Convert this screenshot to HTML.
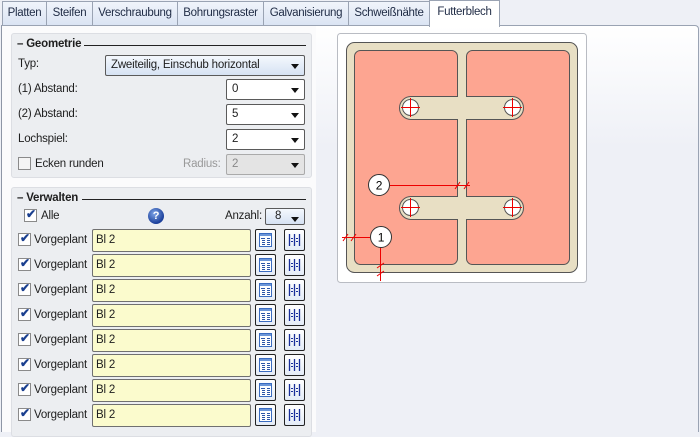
<!DOCTYPE html>
<html><head><meta charset="utf-8"><style>
*{box-sizing:border-box}
body{margin:0;width:700px;height:432px;overflow:hidden;background:#eef0f6;font-family:"Liberation Sans",sans-serif;font-size:11.5px;letter-spacing:-0.2px;color:#1e1e1e;position:relative}
.a{position:absolute}
.tab{position:absolute;top:1px;height:24px;border:1px solid #9aa3b3;border-bottom:none;background:linear-gradient(#f0f4fb,#dbe4f3);line-height:22px;text-align:center;font-size:11.5px;letter-spacing:-0.3px;color:#1e2a44}
.grp{position:absolute;left:11px;width:301px;background:#eceef1;border:1px solid #dcdee3;border-radius:3px}
.lbl{position:absolute}
.dd{position:absolute;height:21px;background:#fff;border:1px solid #5a5a5a;border-radius:2px;padding-left:5px;line-height:19px}
.dd:after{content:"";position:absolute;right:5px;top:8px;border-left:4px solid transparent;border-right:4px solid transparent;border-top:5px solid #111}
.cb{position:absolute;width:13px;height:13px;border:1px solid #8a8a8a;background:#fff}
.ck:after{content:"✔";position:absolute;left:1px;top:-3px;font-size:12px;color:#1a3f8f;font-weight:bold}
.tb{position:absolute;left:92px;width:159px;height:23px;background:#fbfbcd;border:1px solid #707070;border-radius:2px;padding-left:3px;line-height:21px}
.b{position:absolute;width:21px;height:22px;border:1px solid #222;border-radius:2px;background:linear-gradient(#fff,#e4ecf7)}
.b svg{position:absolute;left:0;top:0}
</style></head><body>
<div class="a" style="left:1px;top:25px;width:315px;height:407px;background:#fbfbfc;border-left:1px solid #8e96a6;border-top:1px solid #9aa3b3"></div>
<div class="a" style="left:316px;top:25px;width:383px;height:407px;background:linear-gradient(#fff,#eef0f6 30%);border-top:1px solid #9aa3b3;border-right:1px solid #9aa3b3;border-top-right-radius:4px"></div>
<div class="tab" style="left:2px;width:45px">Platten</div>
<div class="tab" style="left:46px;width:47px">Steifen</div>
<div class="tab" style="left:92px;width:86px">Verschraubung</div>
<div class="tab" style="left:177px;width:87px">Bohrungsraster</div>
<div class="tab" style="left:263px;width:86px">Galvanisierung</div>
<div class="tab" style="left:348px;width:82px">Schweißnähte</div>
<div class="tab" style="left:429px;width:71px;top:0;height:27px;background:#fff;line-height:22px;z-index:2;border-color:#9aa3b3">Futterblech</div>

<div class="grp" style="top:33px;height:145px"></div>
<div class="a" style="left:17px;top:38px;font-weight:bold;background:#eceef1;padding-right:4px">– Geometrie</div>
<div class="a" style="left:84px;top:45px;width:222px;height:1px;background:#222"></div>
<div class="lbl" style="left:18px;top:58px">Typ:</div>
<div class="dd" style="left:105px;top:55px;width:200px;background:linear-gradient(#f4f8fd,#d6e2f3)">Zweiteilig, Einschub horizontal</div>
<div class="lbl" style="left:18px;top:83px">(1) Abstand:</div>
<div class="dd" style="left:226px;top:79px;width:79px">0</div>
<div class="lbl" style="left:18px;top:108px">(2) Abstand:</div>
<div class="dd" style="left:226px;top:104px;width:79px">5</div>
<div class="lbl" style="left:18px;top:133px">Lochspiel:</div>
<div class="dd" style="left:226px;top:129px;width:79px">2</div>
<div class="cb" style="left:18px;top:157px;background:#f4f4f4"></div>
<div class="lbl" style="left:35px;top:158px">Ecken runden</div>
<div class="lbl" style="left:183px;top:158px;color:#999">Radius:</div>
<div class="dd" style="left:226px;top:154px;width:79px;background:#e4e4e4;border-color:#aaa;color:#888">2</div>

<div class="grp" style="top:187px;height:250px"></div>
<div class="a" style="left:17px;top:192px;font-weight:bold;background:#eceef1;padding-right:4px">– Verwalten</div>
<div class="a" style="left:82px;top:199px;width:224px;height:1px;background:#222"></div>
<div class="cb ck" style="left:24px;top:209px"></div>
<div class="lbl" style="left:41px;top:210px">Alle</div>
<div class="a" style="left:148px;top:208px;width:16px;height:16px;border-radius:50%;background:radial-gradient(circle at 40% 35%,#7fa6e8,#1b3f9a 70%);color:#fff;font-weight:bold;font-size:11px;text-align:center;line-height:16px">?</div>
<div class="lbl" style="left:225px;top:210px">Anzahl:</div>
<div class="dd" style="left:265px;top:208px;width:40px;height:17px;line-height:15px;padding-left:9px;background:linear-gradient(#f4f8fd,#d6e2f3)">8</div>

<div style="position:absolute;left:0;top:229px"><div class="cb ck" style="left:18px;top:4px"></div><div class="lbl" style="left:34px;top:5px">Vorgeplant</div><div class="tb" style="top:0">Bl 2</div><div class="b" style="left:255px;top:0"><svg width="19" height="20"><rect x="3.5" y="3.5" width="12" height="13" fill="#fff" stroke="#3a6bc0"/><rect x="4" y="4" width="11" height="2" fill="#6c96d8"/><path d="M5 8.5h4M6 10.5h3M6 12.5h3M6 14.5h3M11 8.5h3M11 10.5h3M11 12.5h3M11 14.5h3" stroke="#2c55a8"/></svg></div><div class="b" style="left:284px;top:0"><svg width="19" height="20"><path d="M4.5 4v12M14.5 4v12M9.5 4v12" stroke="#1a2f9a" stroke-width="1.3"/><path d="M6 8.5h2M6 11.5h2M11 8.5h2M11 11.5h2" stroke="#1a2f9a"/></svg></div></div>
<div style="position:absolute;left:0;top:254px"><div class="cb ck" style="left:18px;top:4px"></div><div class="lbl" style="left:34px;top:5px">Vorgeplant</div><div class="tb" style="top:0">Bl 2</div><div class="b" style="left:255px;top:0"><svg width="19" height="20"><rect x="3.5" y="3.5" width="12" height="13" fill="#fff" stroke="#3a6bc0"/><rect x="4" y="4" width="11" height="2" fill="#6c96d8"/><path d="M5 8.5h4M6 10.5h3M6 12.5h3M6 14.5h3M11 8.5h3M11 10.5h3M11 12.5h3M11 14.5h3" stroke="#2c55a8"/></svg></div><div class="b" style="left:284px;top:0"><svg width="19" height="20"><path d="M4.5 4v12M14.5 4v12M9.5 4v12" stroke="#1a2f9a" stroke-width="1.3"/><path d="M6 8.5h2M6 11.5h2M11 8.5h2M11 11.5h2" stroke="#1a2f9a"/></svg></div></div>
<div style="position:absolute;left:0;top:279px"><div class="cb ck" style="left:18px;top:4px"></div><div class="lbl" style="left:34px;top:5px">Vorgeplant</div><div class="tb" style="top:0">Bl 2</div><div class="b" style="left:255px;top:0"><svg width="19" height="20"><rect x="3.5" y="3.5" width="12" height="13" fill="#fff" stroke="#3a6bc0"/><rect x="4" y="4" width="11" height="2" fill="#6c96d8"/><path d="M5 8.5h4M6 10.5h3M6 12.5h3M6 14.5h3M11 8.5h3M11 10.5h3M11 12.5h3M11 14.5h3" stroke="#2c55a8"/></svg></div><div class="b" style="left:284px;top:0"><svg width="19" height="20"><path d="M4.5 4v12M14.5 4v12M9.5 4v12" stroke="#1a2f9a" stroke-width="1.3"/><path d="M6 8.5h2M6 11.5h2M11 8.5h2M11 11.5h2" stroke="#1a2f9a"/></svg></div></div>
<div style="position:absolute;left:0;top:304px"><div class="cb ck" style="left:18px;top:4px"></div><div class="lbl" style="left:34px;top:5px">Vorgeplant</div><div class="tb" style="top:0">Bl 2</div><div class="b" style="left:255px;top:0"><svg width="19" height="20"><rect x="3.5" y="3.5" width="12" height="13" fill="#fff" stroke="#3a6bc0"/><rect x="4" y="4" width="11" height="2" fill="#6c96d8"/><path d="M5 8.5h4M6 10.5h3M6 12.5h3M6 14.5h3M11 8.5h3M11 10.5h3M11 12.5h3M11 14.5h3" stroke="#2c55a8"/></svg></div><div class="b" style="left:284px;top:0"><svg width="19" height="20"><path d="M4.5 4v12M14.5 4v12M9.5 4v12" stroke="#1a2f9a" stroke-width="1.3"/><path d="M6 8.5h2M6 11.5h2M11 8.5h2M11 11.5h2" stroke="#1a2f9a"/></svg></div></div>
<div style="position:absolute;left:0;top:329px"><div class="cb ck" style="left:18px;top:4px"></div><div class="lbl" style="left:34px;top:5px">Vorgeplant</div><div class="tb" style="top:0">Bl 2</div><div class="b" style="left:255px;top:0"><svg width="19" height="20"><rect x="3.5" y="3.5" width="12" height="13" fill="#fff" stroke="#3a6bc0"/><rect x="4" y="4" width="11" height="2" fill="#6c96d8"/><path d="M5 8.5h4M6 10.5h3M6 12.5h3M6 14.5h3M11 8.5h3M11 10.5h3M11 12.5h3M11 14.5h3" stroke="#2c55a8"/></svg></div><div class="b" style="left:284px;top:0"><svg width="19" height="20"><path d="M4.5 4v12M14.5 4v12M9.5 4v12" stroke="#1a2f9a" stroke-width="1.3"/><path d="M6 8.5h2M6 11.5h2M11 8.5h2M11 11.5h2" stroke="#1a2f9a"/></svg></div></div>
<div style="position:absolute;left:0;top:354px"><div class="cb ck" style="left:18px;top:4px"></div><div class="lbl" style="left:34px;top:5px">Vorgeplant</div><div class="tb" style="top:0">Bl 2</div><div class="b" style="left:255px;top:0"><svg width="19" height="20"><rect x="3.5" y="3.5" width="12" height="13" fill="#fff" stroke="#3a6bc0"/><rect x="4" y="4" width="11" height="2" fill="#6c96d8"/><path d="M5 8.5h4M6 10.5h3M6 12.5h3M6 14.5h3M11 8.5h3M11 10.5h3M11 12.5h3M11 14.5h3" stroke="#2c55a8"/></svg></div><div class="b" style="left:284px;top:0"><svg width="19" height="20"><path d="M4.5 4v12M14.5 4v12M9.5 4v12" stroke="#1a2f9a" stroke-width="1.3"/><path d="M6 8.5h2M6 11.5h2M11 8.5h2M11 11.5h2" stroke="#1a2f9a"/></svg></div></div>
<div style="position:absolute;left:0;top:379px"><div class="cb ck" style="left:18px;top:4px"></div><div class="lbl" style="left:34px;top:5px">Vorgeplant</div><div class="tb" style="top:0">Bl 2</div><div class="b" style="left:255px;top:0"><svg width="19" height="20"><rect x="3.5" y="3.5" width="12" height="13" fill="#fff" stroke="#3a6bc0"/><rect x="4" y="4" width="11" height="2" fill="#6c96d8"/><path d="M5 8.5h4M6 10.5h3M6 12.5h3M6 14.5h3M11 8.5h3M11 10.5h3M11 12.5h3M11 14.5h3" stroke="#2c55a8"/></svg></div><div class="b" style="left:284px;top:0"><svg width="19" height="20"><path d="M4.5 4v12M14.5 4v12M9.5 4v12" stroke="#1a2f9a" stroke-width="1.3"/><path d="M6 8.5h2M6 11.5h2M11 8.5h2M11 11.5h2" stroke="#1a2f9a"/></svg></div></div>
<div style="position:absolute;left:0;top:404px"><div class="cb ck" style="left:18px;top:4px"></div><div class="lbl" style="left:34px;top:5px">Vorgeplant</div><div class="tb" style="top:0">Bl 2</div><div class="b" style="left:255px;top:0"><svg width="19" height="20"><rect x="3.5" y="3.5" width="12" height="13" fill="#fff" stroke="#3a6bc0"/><rect x="4" y="4" width="11" height="2" fill="#6c96d8"/><path d="M5 8.5h4M6 10.5h3M6 12.5h3M6 14.5h3M11 8.5h3M11 10.5h3M11 12.5h3M11 14.5h3" stroke="#2c55a8"/></svg></div><div class="b" style="left:284px;top:0"><svg width="19" height="20"><path d="M4.5 4v12M14.5 4v12M9.5 4v12" stroke="#1a2f9a" stroke-width="1.3"/><path d="M6 8.5h2M6 11.5h2M11 8.5h2M11 11.5h2" stroke="#1a2f9a"/></svg></div></div>

<svg class="a" style="left:0;top:0" width="700" height="432">
<rect x="337.5" y="33.5" width="249" height="249" rx="3" fill="#fff" stroke="#b9bcc3"/>
<rect x="346.5" y="42.5" width="231" height="230" rx="8" fill="#e8dfc4" stroke="#555"/>
<rect x="354.5" y="50.5" width="103" height="214" rx="6" fill="#fda591" stroke="#555"/>
<rect x="466.5" y="50.5" width="103" height="214" rx="6" fill="#fda591" stroke="#555"/>
<rect x="399.5" y="96.5" width="124" height="23" rx="11.5" fill="#e8dfc4" stroke="#555"/>
<rect x="399.5" y="196.5" width="124" height="23" rx="11.5" fill="#e8dfc4" stroke="#555"/>
<rect x="458" y="51" width="8" height="213" fill="#e8dfc4"/>
<g fill="#fff" stroke="#555"><circle cx="410.5" cy="107.5" r="8"/><circle cx="512.5" cy="107.5" r="8"/><circle cx="410.5" cy="207.5" r="8"/><circle cx="512.5" cy="207.5" r="8"/></g>
<g stroke="#e00" stroke-width="1"><path d="M401 107.5h19M410.5 98v19M503 107.5h19M512.5 98v19M401 207.5h19M410.5 198v19M503 207.5h19M512.5 198v19"/>
<path d="M390 185.5h80M455 189l5-7M464 189l5-7"/>
<path d="M342 237.5h28M343 241l5-7M351 241l5-7"/>
<path d="M380.5 248v33M377 268l7-5M377 276l7-5"/></g>
<g fill="#fff" stroke="#333"><circle cx="379" cy="185" r="10.5"/><circle cx="381" cy="237" r="10.5"/></g>
<text x="379" y="189.5" font-size="12" text-anchor="middle" font-family="Liberation Sans">2</text>
<text x="381" y="241.5" font-size="12" text-anchor="middle" font-family="Liberation Sans">1</text>
</svg>
</body></html>
